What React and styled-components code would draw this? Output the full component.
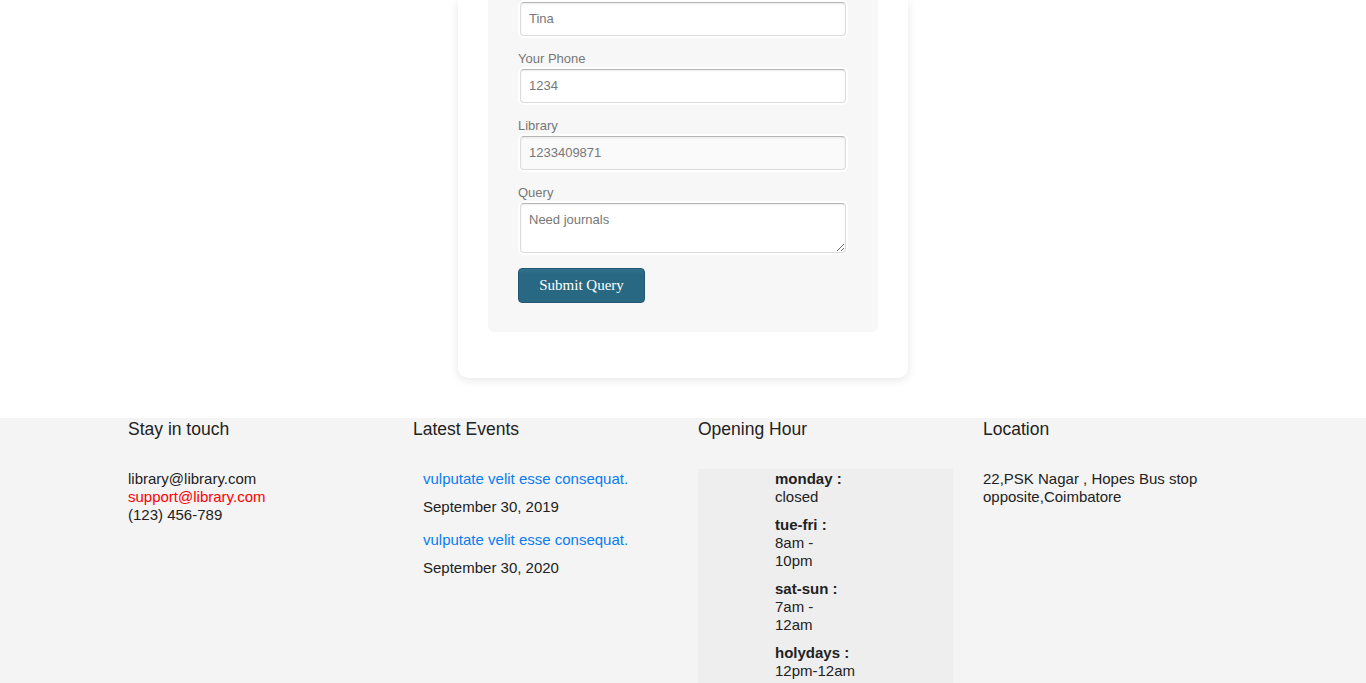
import styled, { createGlobalStyle } from "styled-components";

const GlobalStyle = createGlobalStyle`
  body {
    margin: 0;
    background: #fff;
    font-family: "Liberation Sans", Arial, sans-serif;
  }
`;

const EVENTS = [
  { id: 1, title: "vulputate velit esse consequat.", date: "September 30, 2019" },
  { id: 2, title: "vulputate velit esse consequat.", date: "September 30, 2020" },
];

const HOURS = [
  { id: 1, day: "monday :", time: "closed" },
  { id: 2, day: "tue-fri :", time: "8am - 10pm" },
  { id: 3, day: "sat-sun :", time: "7am - 12am" },
  { id: 4, day: "holydays :", time: "12pm-12am" },
];

const App = () => {
  return (
    <>
      <GlobalStyle />
      <Page>
        <Card>
          <Panel>
            <Form onSubmit={(e) => e.preventDefault()}>
              <Input type="text" defaultValue="Tina" first />
              <Label>Your Phone</Label>
              <Input type="text" defaultValue="1234" />
              <Label>Library</Label>
              <Input type="text" defaultValue="1233409871" readOnly muted />
              <Label>Query</Label>
              <TextArea defaultValue="Need journals" />
              <SubmitBtn type="submit">Submit Query</SubmitBtn>
            </Form>
          </Panel>
        </Card>
      </Page>
      <Footer>
        <Container>
          <Column>
            <Heading>Stay in touch</Heading>
            <Contact>
              <div>library@library.com</div>
              <Support>support@library.com</Support>
              <div>(123) 456-789</div>
            </Contact>
          </Column>
          <Column>
            <Heading>Latest Events</Heading>
            <EventList>
              {EVENTS.map((ev) => (
                <Event key={ev.id}>
                  <EventLink href="#">{ev.title}</EventLink>
                  <EventDate>{ev.date}</EventDate>
                </Event>
              ))}
            </EventList>
          </Column>
          <Column>
            <Heading>Opening Hour</Heading>
            <HoursBox>
              <HoursList>
                {HOURS.map((h) => (
                  <HoursItem key={h.id}>
                    <Day>{h.day}</Day>
                    <Time keep={!h.time.includes(" ")}>{h.time}</Time>
                  </HoursItem>
                ))}
              </HoursList>
            </HoursBox>
          </Column>
          <Column>
            <Heading>Location</Heading>
            <Address>22,PSK Nagar , Hopes Bus stop opposite,Coimbatore</Address>
          </Column>
        </Container>
      </Footer>
    </>
  );
};

const Page = styled.div`
  display: flex;
  justify-content: center;
  padding-bottom: 40px;
`;

const Card = styled.div`
  width: 450px;
  box-sizing: border-box;
  padding: 0 30px 46px;
  background: #fff;
  border-radius: 0 0 10px 10px;
  box-shadow: 0 2px 10px rgba(0, 0, 0, 0.1);
`;

const Panel = styled.div`
  background: #f7f7f7;
  border-radius: 0 0 6px 6px;
  padding: 0 30px 29px;
`;

const Form = styled.form`
  display: flex;
  flex-direction: column;
  align-items: flex-start;
`;

const Label = styled.label`
  margin: 15px 0 2px;
  font-size: 13px;
  line-height: 16px;
  color: #777;
`;

const fieldStyle = `
  box-sizing: border-box;
  width: 326px;
  margin-left: 2px;
  padding: 0 8px 1px;
  border: 1px solid #dcdcdc;
  border-top-color: #b5b5b5;
  border-radius: 4px;
  box-shadow: inset 0 1px 2px rgba(0, 0, 0, 0.08), 0 0 0 2px rgba(255, 255, 255, 0.9);
  font-family: "Liberation Sans", Arial, sans-serif;
  font-size: 13px;
  color: #777;
  outline: none;
`;

const Input = styled.input.withConfig({
  shouldForwardProp: (p) => p !== "first" && p !== "muted",
})`
  ${fieldStyle}
  height: 34px;
  margin-top: ${(p) => (p.first ? "2px" : "0")};
  background: ${(p) => (p.muted ? "#fafafa" : "#fff")};
`;

const TextArea = styled.textarea`
  ${fieldStyle}
  height: 50px;
  padding-top: 8px;
  background: #fff;
  resize: both;
`;

const SubmitBtn = styled.button`
  margin-top: 15px;
  width: 127px;
  height: 35px;
  border: 1px solid #1f5870;
  border-radius: 4px;
  background: linear-gradient(#33728e, #286882 15%, #286882);
  color: #fff;
  font-family: "Liberation Serif", "Times New Roman", serif;
  font-size: 15px;
  cursor: pointer;
`;

const Footer = styled.footer`
  background: #f4f4f4;
  color: #222;
  font-size: 15px;
  line-height: 18px;
  min-height: 300px;
`;

const Container = styled.div`
  width: 1140px;
  margin: 0 auto;
  display: grid;
  grid-template-columns: repeat(4, 1fr);
`;

const Column = styled.div`
  padding: 0 15px;
`;

const Heading = styled.h4`
  margin: 0 0 29px;
  font-size: 17.5px;
  line-height: 22px;
  font-weight: normal;
  color: #222;
`;

const Contact = styled.div`
  padding-top: 1px;
`;

const Support = styled.div`
  color: #f00;
`;

const EventList = styled.div`
  padding: 1px 0 0 10px;
  display: flex;
  flex-direction: column;
  gap: 15px;
`;

const Event = styled.div`
  display: flex;
  flex-direction: column;
  gap: 10px;
`;

const EventLink = styled.a`
  color: #0a7cf2;
  text-decoration: none;
`;

const EventDate = styled.div`
  color: #222;
`;

const HoursBox = styled.div`
  background: #eeeeee;
  padding: 1px 0 20px 77px;
`;

const HoursList = styled.div`
  width: 70px;
  display: flex;
  flex-direction: column;
  gap: 10px;
`;

const HoursItem = styled.div``;

const Day = styled.div`
  font-weight: bold;
  white-space: nowrap;
`;

const Time = styled.div.withConfig({ shouldForwardProp: (p) => p !== "keep" })`
  white-space: ${(p) => (p.keep ? "nowrap" : "normal")};
`;

const Address = styled.div`
  padding-top: 1px;
`;

export default App;
